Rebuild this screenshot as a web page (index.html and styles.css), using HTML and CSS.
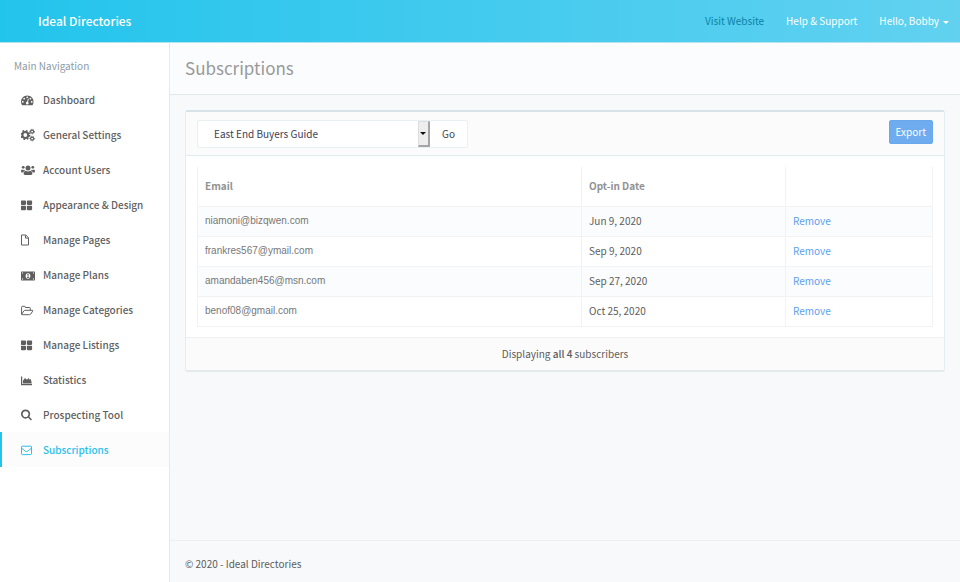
FILE: index.html
```html
<!DOCTYPE html>
<html lang="en">
<head>
<meta charset="utf-8">
<meta name="viewport" content="width=device-width, initial-scale=1">
<title>Subscriptions - Ideal Directories</title>
<link rel="stylesheet" href="styles.css">
</head>
<body>
<svg class="sprite" aria-hidden="true">
  <symbol id="i-dash" viewBox="0 -100 2000 2000"><path d="M384 1152q0-53-37.500-90.500t-90.500-37.500-90.500 37.500-37.500 90.500 37.500 90.500 90.500 37.500 90.500-37.500 37.500-90.500zm192-448q0-53-37.500-90.500t-90.500-37.500-90.500 37.500-37.500 90.500 37.500 90.500 90.500 37.500 90.500-37.500 37.500-90.500zm428 481l101-382q6-26-7.500-48.500t-38.500-29.500-48 6.500-30 39.500l-101 382q-60 5-107 43.500t-63 98.500q-20 77 20 146t117 89 146-20 89-117q16-60-6-117t-72-91zm660-33q0-53-37.500-90.500t-90.500-37.500-90.500 37.500-37.500 90.500 37.500 90.500 90.500 37.500 90.500-37.500 37.500-90.500zm-640-640q0-53-37.500-90.500t-90.500-37.500-90.500 37.500-37.500 90.500 37.500 90.500 90.500 37.500 90.500-37.500 37.500-90.500zm448 192q0-53-37.500-90.500t-90.500-37.500-90.500 37.500-37.500 90.500 37.500 90.500 90.500 37.500 90.500-37.500 37.500-90.500zm320 448q0 261-141 483-19 29-54 29h-1402q-35 0-54-29-141-221-141-483 0-182 71-348t191-286 286-191 348-71 348 71 286 191 191 286 71 348z"/></symbol>
  <symbol id="i-cogs" viewBox="0.700 0 14 14"><g fill="none" stroke="currentColor"><circle cx="5" cy="7" r="2.900" stroke-width="2"/><circle cx="5" cy="7" r="4.300" stroke-width="1.600" stroke-dasharray="1.690 1.690"/><circle cx="11.800" cy="3.600" r="1.500" stroke-width="1.200"/><circle cx="11.800" cy="3.600" r="2.300" stroke-width="1" stroke-dasharray="1.030 1.030"/><circle cx="11.800" cy="10.600" r="1.500" stroke-width="1.200"/><circle cx="11.800" cy="10.600" r="2.300" stroke-width="1" stroke-dasharray="1.030 1.030"/></g></symbol>
  <symbol id="i-users" viewBox="0 0 14 14"><circle cx="7" cy="4.900" r="2.500"/><path d="M4.500 7.700q2.500 1.600 5 0 1.900.6 1.900 2.900 0 1.300-1.300 1.300H3.900q-1.300 0-1.300-1.300 0-2.300 1.900-2.900z"/><circle cx="2.200" cy="4.300" r="1.400"/><circle cx="11.800" cy="4.300" r="1.400"/><path d="M.8 6.500q1.300.8 2.600.2.300.6.600.8-1.300.5-1.800 2H1Q0 9.500 0 8.300q0-1.300.8-1.800zM13.200 6.500q-1.300.8-2.600.2-.3.600-.6.800 1.300.5 1.800 2H13q1 0 1-1.200 0-1.300-.8-1.800z"/></symbol>
  <symbol id="i-grid" viewBox="100 -240 2050 2050"><path d="M832 1024v384q0 52-38 90t-90 38h-512q-52 0-90-38t-38-90v-384q0-52 38-90t90-38h512q52 0 90 38t38 90zm0-768v384q0 52-38 90t-90 38h-512q-52 0-90-38t-38-90v-384q0-52 38-90t90-38h512q52 0 90 38t38 90zm896 768v384q0 52-38 90t-90 38h-512q-52 0-90-38t-38-90v-384q0-52 38-90t90-38h512q52 0 90 38t38 90zm0-768v384q0 52-38 90t-90 38h-512q-52 0-90-38t-38-90v-384q0-52 38-90t90-38h512q52 0 90 38t38 90z"/></symbol>
  <symbol id="i-file" viewBox="1 0 14 14"><path d="M1.500 2h4.300L8.500 4.800v7.200h-7zM5.500 2.300v2.800h2.800" fill="none" stroke="currentColor" stroke-linejoin="round"/></symbol>
  <symbol id="i-money" viewBox="0 -1 14 14"><path fill-rule="evenodd" d="M.6 2.600h12.800q.6 0 .6.600v7.600q0 .6-.6.600H.6q-.6 0-.6-.6V3.200q0-.6.6-.6zM7 4.200c-1.500 0-2.400 1.200-2.400 2.800S5.500 9.800 7 9.800 9.400 8.600 9.400 7 8.500 4.200 7 4.200zM1 3.600v1.200q1.100-.1 1.200-1.200zm12 0v1.200q-1.100-.1-1.200-1.200zM1 10.400V9.200q1.100.1 1.200 1.200zm12 0V9.200q-1.100.1-1.200 1.200z"/><path d="M6.700 5h.8v3.300h.7V9H6v-.7h.7V6.100l-.6.200v-.8z"/></symbol>
  <symbol id="i-folder" viewBox="0 -1 14 14"><path d="M.6 10.200V3.200q0-.9.900-.9h2q.8 0 .8.900v.3h4.100q.9 0 .9.900v1.700M.6 10.300l2.300-3.400q.4-.6 1.100-.6h7.300q.9 0 .4.800l-2 3q-.5.600-1.200.600H1.200q-.6 0-.6-.6z" fill="none" stroke="currentColor" stroke-linejoin="round"/></symbol>
  <symbol id="i-area" viewBox="0 -1 14 14"><path d="M0 2.500h1.200v7.600H11v1.200H0zM1.900 9.500V6.800L4 4l2 1.700L7.500 4l1.300 1.700 1-.7L10.800 9.500z"/></symbol>
  <symbol id="i-search" viewBox="64 -100 2150 2150"><path d="M1216 832q0-185-131.500-316.500t-316.500-131.500-316.500 131.500-131.500 316.500 131.500 316.500 316.500 131.500 316.500-131.500 131.500-316.500zm512 832q0 52-38 90t-90 38q-54 0-90-38l-343-342q-179 124-399 124-143 0-273.500-55.500t-225-150-150-225-55.500-273.500 55.500-273.500 150-225 225-150 273.500-55.500 273.500 55.500 225 150 150 225 55.500 273.500q0 220-124 399l343 343q37 37 37 90z"/></symbol>
  <symbol id="i-mail" viewBox="0 -1 14 14"><path d="M.5 3q0-.8.800-.8h8.400q.8 0 .8.800v6.800q0 .8-.8.800H1.300q-.8 0-.8-.8zM.6 3.900q.5.900 1.400 1.500l2.300 1.800q1.200.9 2.400 0L9 5.400q.9-.6 1.400-1.500" fill="none" stroke="currentColor"/></symbol>
</svg>

<header class="topbar">
  <a class="brand" href="#">Ideal Directories</a>
  <nav class="top-links">
    <a class="muted" href="#">Visit Website</a>
    <a href="#">Help &amp; Support</a>
    <a href="#">Hello, Bobby<span class="caret"></span></a>
  </nav>
</header>

<div class="shell">
  <aside class="sidebar">
    <h2>Main Navigation</h2>
    <nav class="menu">
      <a href="#"><svg><use href="#i-dash"/></svg>Dashboard</a>
      <a href="#"><svg><use href="#i-cogs"/></svg>General Settings</a>
      <a href="#"><svg><use href="#i-users"/></svg>Account Users</a>
      <a href="#"><svg><use href="#i-grid"/></svg>Appearance &amp; Design</a>
      <a href="#"><svg><use href="#i-file"/></svg>Manage Pages</a>
      <a href="#"><svg><use href="#i-money"/></svg>Manage Plans</a>
      <a href="#"><svg><use href="#i-folder"/></svg>Manage Categories</a>
      <a href="#"><svg><use href="#i-grid"/></svg>Manage Listings</a>
      <a href="#"><svg><use href="#i-area"/></svg>Statistics</a>
      <a href="#"><svg><use href="#i-search"/></svg>Prospecting Tool</a>
      <a class="active" href="#" aria-current="page"><svg><use href="#i-mail"/></svg>Subscriptions</a>
    </nav>
  </aside>

  <div class="page">
    <div class="title-bar"><h1>Subscriptions</h1></div>
    <main class="content">
      <section class="panel">
        <div class="panel-head">
          <form class="picker">
            <span class="select-box">
              <select aria-label="Directory"><option>East End Buyers Guide</option></select>
            </span>
            <button type="button" class="go">Go</button>
          </form>
          <button type="button" class="export">Export</button>
        </div>
        <div class="panel-body">
          <table>
            <colgroup><col><col class="c-date"><col class="c-action"></colgroup>
            <thead><tr><th>Email</th><th>Opt-in Date</th><th></th></tr></thead>
            <tbody>
              <tr><td class="email">niamoni@bizqwen.com</td><td>Jun 9, 2020</td><td><a href="#">Remove</a></td></tr>
              <tr><td class="email">frankres567@ymail.com</td><td>Sep 9, 2020</td><td><a href="#">Remove</a></td></tr>
              <tr><td class="email">amandaben456@msn.com</td><td>Sep 27, 2020</td><td><a href="#">Remove</a></td></tr>
              <tr><td class="email">benof08@gmail.com</td><td>Oct 25, 2020</td><td><a href="#">Remove</a></td></tr>
            </tbody>
          </table>
        </div>
        <div class="panel-foot">Displaying <strong>all 4</strong> subscribers</div>
      </section>
    </main>
    <footer class="page-foot">© 2020 - Ideal Directories</footer>
  </div>
</div>
</body>
</html>
```
FILE: styles.css
```css
*, *::before, *::after { box-sizing: border-box; }

body {
  margin: 0;
  min-height: 100vh;
  display: flex;
  flex-direction: column;
  font: 400 10px/16px "Noto Sans CJK SC", "Noto Sans", sans-serif;
  color: #5c5c5c;
  background: #f7f9fb;
}

a { color: inherit; text-decoration: none; }
h1, h2 { margin: 0; font-weight: 400; }
.sprite { position: absolute; width: 0; height: 0; }

.topbar {
  display: flex;
  align-items: center;
  justify-content: space-between;
  height: 43px;
  padding: 0 11px 0 38px;
  color: #fff;
  background: linear-gradient(90deg, #23c4ec, #62d1f0);
  border-bottom: 1px solid #b4e2ef;
}
.brand { font-size: 12px; font-weight: 500; }
.top-links { display: flex; gap: 22px; }
.top-links .muted { color: #0c82a4; }
.caret {
  display: inline-block;
  margin-left: 4px;
  vertical-align: middle;
  border: 3px solid transparent;
  border-top-color: #fff;
  border-bottom: 0;
}

.shell { flex: 1; display: flex; }

.sidebar {
  flex: 0 0 170px;
  background: #fff;
  border-right: 1px solid #e6eaec;
}
.sidebar h2 {
  padding: 15px 14px 8px;
  font-size: 10px;
  line-height: 16px;
  color: #8c9ba8;
}
.menu { display: flex; flex-direction: column; }
.menu a {
  display: flex;
  align-items: center;
  gap: 8px;
  height: 35px;
  padding-left: 19px;
  border-left: 2px solid transparent;
  font-weight: 500;
  color: #5f5f5f;
}
.menu svg { width: 14px; height: 14px; fill: currentColor; }
.menu .active {
  color: #2bc0ec;
  background: #fcfcfd;
  border-left-color: #23c4ec;
}

.page { flex: 1; min-width: 0; display: flex; flex-direction: column; }
.title-bar {
  padding: 13px 15px 14px;
  background: #fbfcfe;
  border-bottom: 1px solid #dfe9ec;
}
.title-bar h1 { font-size: 17px; line-height: 24px; color: #999; }
.content { flex: 1; padding: 15px 15px 0; }

.panel {
  background: #fff;
  border: 1px solid #e4edf1;
  border-top: 2px solid #d6e2e8;
  border-bottom: 2px solid #e4e9ec;
  border-radius: 3px;
}
.panel-head {
  display: flex;
  align-items: flex-start;
  justify-content: space-between;
  padding: 8px 11px 7px;
  background: #fbfbfb;
  border-bottom: 1px solid #e1eaed;
}
.picker {
  display: flex;
  height: 28px;
  background: #fff;
  border: 1px solid #e8f0f3;
  border-radius: 2px;
}
.select-box { position: relative; display: flex; width: 232px; }
.select-box select {
  appearance: none;
  width: 100%;
  padding: 0 16px;
  border: 0;
  font: inherit;
  color: #3e4055;
  background: transparent;
}
.select-box::before {
  content: "";
  position: absolute;
  inset: 0 0 0 auto;
  width: 12px;
  background: #eee;
  border: 1px solid #ddd;
  border-right: 2px solid #a5a5a5;
  border-bottom: 2px solid #a5a5a5;
  pointer-events: none;
}
.select-box::after {
  content: "";
  position: absolute;
  right: 4px;
  top: 11px;
  border: 3px solid transparent;
  border-top-color: #111;
  border-bottom: 0;
  pointer-events: none;
}
button { font: inherit; cursor: pointer; }
.go { width: 37px; padding: 0; border: 0; background: #fff; color: #444; border-radius: 2px; }
.export {
  height: 24px;
  padding: 0 6px;
  border: 1px solid #68a8ee;
  border-radius: 2px;
  background: #6eacef;
  color: #fff;
}

.panel-body { padding: 11px 11px 10px; }
table { width: 100%; table-layout: fixed; border-collapse: collapse; }
.c-date { width: 204px; }
.c-action { width: 147px; }
th, td { padding: 0 7px; text-align: left; border: 1px solid #f0f2f4; }
th { height: 39px; border-top: 0; font-weight: 700; color: #929292; }
td { height: 30px; }
tbody tr:nth-child(odd) { background: #fafcfe; }
.email { font: 400 10px/16px "Liberation Sans", Arial, sans-serif; color: #777; }
td a { color: #5a9fee; }

.panel-foot {
  padding: 8px;
  text-align: center;
  background: #fbfbfb;
  border-top: 1px solid #eef1f3;
}
.panel-foot strong { font-weight: 500; }
.page-foot {
  padding: 15px 15px 10px;
  border-top: 1px solid #edf0f3;
}
```
